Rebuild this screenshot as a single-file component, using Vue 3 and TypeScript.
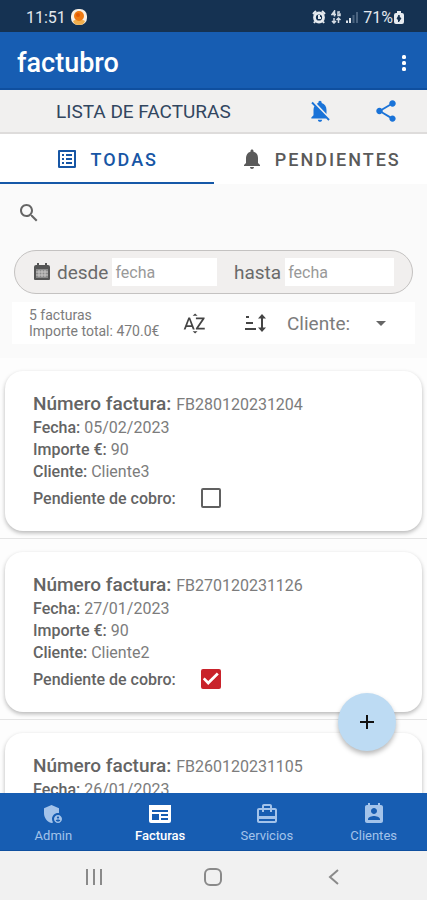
<script setup lang="ts">
import { ref } from 'vue'

interface Invoice {
  id: string
  date: string
  amount: number
  client: string
  pending: boolean
}

const invoices = ref<Invoice[]>([
  { id: 'FB280120231204', date: '05/02/2023', amount: 90, client: 'Cliente3', pending: false },
  { id: 'FB270120231126', date: '27/01/2023', amount: 90, client: 'Cliente2', pending: true },
  { id: 'FB260120231105', date: '26/01/2023', amount: 90, client: 'Cliente1', pending: false },
])

const tab = ref<'all' | 'pending'>('all')
const search = ref('')
const from = ref('')
const to = ref('')

const sections = [
  {
    label: 'Admin',
    icon: 'M17 11c.34 0 .67.04 1 .09V6.27L10.5 3 3 6.27v4.91c0 4.54 3.2 8.79 7.5 9.82.55-.13 1.08-.32 1.6-.55-.69-.98-1.1-2.17-1.1-3.45 0-3.31 2.69-6 6-6zM17 13c-2.21 0-4 1.79-4 4s1.79 4 4 4 4-1.79 4-4-1.79-4-4-4zm0 1.38c.62 0 1.12.51 1.12 1.12s-.51 1.12-1.12 1.12-1.12-.51-1.12-1.12.5-1.12 1.12-1.12zm0 5.37c-.93 0-1.74-.46-2.24-1.17.05-.72 1.51-1.08 2.24-1.08s2.19.36 2.24 1.08c-.5.71-1.31 1.17-2.24 1.17z',
  },
  {
    label: 'Facturas',
    icon: 'M1 3h22v16a2 2 0 0 1-2 2H3a2 2 0 0 1-2-2zM4 8v2h16V8zM4 12v6h7v-6zM13 12v2h7v-2zM13 16v2h7v-2z',
  },
  {
    label: 'Servicios',
    icon: 'M20 6h-3V4c0-1.11-.89-2-2-2H9c-1.11 0-2 .89-2 2v2H4c-1.11 0-2 .89-2 2v11c0 1.11.89 2 2 2h16c1.11 0 2-.89 2-2V8c0-1.11-.89-2-2-2zM9 4h6v2H9V4zm11 15H4v-2h16v2zm0-5H4V8h3v2h2V8h6v2h2V8h3v6z',
  },
  {
    label: 'Clientes',
    icon: 'M19 3h-1V1h-2v2H8V1H6v2H5c-1.11 0-2 .9-2 2v14c0 1.1.89 2 2 2h14c1.1 0 2-.9 2-2V5c0-1.1-.9-2-2-2zm-7 3c1.66 0 3 1.34 3 3s-1.34 3-3 3-3-1.34-3-3 1.34-3 3-3zm6 12H6v-1c0-2 4-3.1 6-3.1s6 1.1 6 3.1v1z',
  },
]
const current = ref('Facturas')
</script>

<template>
  <div class="screen">
    <div class="status">
      <span class="clock">11:51</span>
      <svg class="notice" width="16" height="16" viewBox="0 0 16 16" aria-hidden="true">
        <rect x="0" y="0" width="16" height="16" rx="7" fill="#f8efe4" />
        <path d="M2 12c3-2 9-2 12 0-1 3-3 4-6 4s-5-1-6-4z" fill="#f2b04e" />
        <circle cx="8" cy="7" r="5" fill="#ee7a12" />
        <circle cx="7" cy="6" r="2" fill="#e25a05" />
      </svg>
      <div class="signals">
        <svg width="14" height="14" viewBox="0 0 14 14" fill="none" stroke="#e6ebf0" aria-hidden="true">
          <circle cx="7" cy="7.500" r="4.500" stroke-width="2.800" />
          <path d="M7 5v3h2M1 4 4 1M13 4 10 1M3 11.500 2 13M11 11.500l1 1.500" stroke-width="2" />
        </svg>
        <svg width="10" height="14" viewBox="0 0 10 14" fill="none" stroke="#d5dce4" aria-hidden="true">
          <path d="M3.500 6.500V1L1 4.500h4M9 2H7v3.500h2V4H8" stroke-width="1.500" />
          <path d="M3 8v5M1 11l2 2 2-2M7.500 13V8M5.500 10l2-2 2 2" stroke-width="1.500" />
        </svg>
        <svg width="12" height="12" viewBox="0 0 12 12" aria-hidden="true">
          <path d="M0 9.500h2V12H0zM3 7h2v5H3z" fill="#dce2e9" />
          <path d="M6.500 4h2v8h-2zM10 1h2v11h-2z" fill="#4b6480" />
        </svg>
        <span class="charge">71%</span>
        <svg width="10" height="14" viewBox="0 0 10 14" aria-hidden="true">
          <path d="M3 1h4v2h1q2 0 2 2v7q0 2-2 2H2q-2 0-2-2V5q0-2 2-2h1z" fill="#e6ebf0" />
          <path d="M5 5 3 9h1.500v3L7 8H5.500z" fill="#15304f" stroke="#15304f" />
        </svg>
      </div>
    </div>

    <header class="appbar">
      <h1>factubro</h1>
      <button type="button" class="plain" aria-label="Más opciones">
        <svg width="8" height="18" viewBox="0 0 8 18" fill="#fff">
          <rect x="2" y="1" width="4" height="4" rx="1.500" />
          <rect x="2" y="7" width="4" height="4" rx="1.500" />
          <rect x="2" y="13" width="4" height="4" rx="1.500" />
        </svg>
      </button>
    </header>

    <div class="toolbar">
      <h2>LISTA DE FACTURAS</h2>
      <button type="button" class="plain" aria-label="Silenciar avisos">
        <svg width="26" height="26" viewBox="0 0 24 24" fill="#1a73d8">
          <path d="M20 18.690L7.840 6.140 5.270 3.490 4 4.760l2.800 2.800v.01c-.52.99-.8 2.160-.8 3.420v5l-2 2v1h13.730l2 2L21 19.720l-1-1.030zM12 22c1.110 0 2-.89 2-2h-4c0 1.110.89 2 2 2zm6-7.320V11c0-3.080-1.640-5.640-4.500-6.320V4c0-.83-.67-1.500-1.500-1.500s-1.500.67-1.500 1.500v.68c-.5.100-1 .3-1.440.55L18 14.680z" />
        </svg>
      </button>
      <button type="button" class="plain" aria-label="Compartir">
        <svg width="26" height="26" viewBox="0 0 24 24" fill="#1a73d8">
          <path d="M18 16.080c-.76 0-1.440.3-1.960.77L8.910 12.700c.05-.23.09-.46.09-.7s-.04-.47-.09-.7l7.050-4.110c.54.5 1.250.81 2.040.81 1.660 0 3-1.340 3-3s-1.340-3-3-3-3 1.340-3 3c0 .24.04.47.09.7L8.040 9.810C7.500 9.310 6.790 9 6 9c-1.660 0-3 1.340-3 3s1.340 3 3 3c.79 0 1.500-.31 2.040-.81l7.120 4.160c-.05.21-.08.43-.08.65 0 1.610 1.310 2.920 2.920 2.920s2.920-1.310 2.920-2.920-1.310-2.920-2.920-2.920z" />
        </svg>
      </button>
    </div>

    <div class="tabs" role="tablist">
      <button type="button" role="tab" :aria-selected="tab === 'all'" :class="{ on: tab === 'all' }" @click="tab = 'all'">
        <svg width="24" height="24" viewBox="0 0 24 24" fill="currentColor" aria-hidden="true">
          <path d="M19 5v14H5V5h14m1.100-2H3.900c-.5 0-.9.4-.9.9v16.200c0 .4.4.9.9.9h16.200c.4 0 .9-.5.9-.9V3.900c0-.5-.5-.9-.9-.9zM11 7h6v2h-6V7zm0 4h6v2h-6v-2zm0 4h6v2h-6zM7 7h2v2H7zm0 4h2v2H7zm0 4h2v2H7z" />
        </svg>
        TODAS
      </button>
      <button type="button" role="tab" :aria-selected="tab === 'pending'" :class="{ on: tab === 'pending' }" @click="tab = 'pending'">
        <svg width="24" height="24" viewBox="0 0 24 24" fill="currentColor" aria-hidden="true">
          <path d="M12 22c1.100 0 2-.9 2-2h-4c0 1.100.89 2 2 2zm6-6v-5c0-3.070-1.640-5.640-4.500-6.320V4c0-.83-.67-1.500-1.500-1.500s-1.500.67-1.500 1.500v.68C7.630 5.360 6 7.920 6 11v5l-2 2v1h16v-1l-2-2z" />
        </svg>
        PENDIENTES
      </button>
    </div>

    <section class="filters">
      <div class="search">
        <label for="search" aria-label="Buscar">
          <svg width="24" height="24" viewBox="0 0 24 24" fill="#666">
            <path d="M15.500 14h-.79l-.28-.27C15.410 12.590 16 11.110 16 9.500 16 5.910 13.090 3 9.500 3S3 5.910 3 9.500 5.910 16 9.500 16c1.610 0 3.090-.59 4.230-1.570l.27.28v.79l5 4.990L20.490 19l-4.990-5zm-6 0C7.010 14 5 11.990 5 9.500S7.010 5 9.500 5 14 7.010 14 9.500 11.990 14 9.500 14z" />
          </svg>
        </label>
        <input id="search" v-model="search" type="text" />
      </div>

      <div class="dates">
        <svg width="18" height="18" viewBox="0 0 18 18" aria-hidden="true">
          <path d="M3 2h1V0h2v2h6V0h2v2h1q2 0 2 2v12q0 1-1 1H2q-1 0-1-1V4q0-2 2-2z" fill="#555" />
          <path d="M3 6h12v9H3z" fill="#8b8b8b" />
          <path d="M6 7v7M9 7v7M12 7v7M3 9h12M3 12h12" stroke="#c9c7c6" />
        </svg>
        <div class="field">
          <label for="from">desde</label>
          <input id="from" v-model="from" type="text" placeholder="fecha" />
        </div>
        <div class="field">
          <label for="to">hasta</label>
          <input id="to" v-model="to" type="text" placeholder="fecha" />
        </div>
      </div>

      <div class="summary">
        <p>5 facturas<br />Importe total: 470.0€</p>
        <button type="button" class="plain" aria-label="Ordenar por nombre">
          <svg width="25" height="25" viewBox="0 0 24 24" fill="#444">
            <path d="M14.940 4.660h-4.720l2.360-2.360zm-4.690 14.710h4.660l-2.330 2.330zM6.100 6.270L1.600 17.730h1.840l.92-2.450h5.110l.92 2.450h1.840L7.740 6.270H6.100zm-1.130 7.370l1.940-5.180 1.940 5.180H4.970zm10.760 2.500h6.120v1.590h-8.530v-1.290l5.920-8.560h-5.880v-1.600h8.300v1.260l-5.930 8.600z" />
          </svg>
        </button>
        <button type="button" class="plain" aria-label="Ordenar por importe">
          <svg width="22" height="20" viewBox="0 0 22 20" fill="none" stroke="#444" stroke-width="2">
            <path d="M1 4h3M1 10h7M0 16h11M17 4v12" />
            <path d="M13 5.500 17 1l4 4.500zM13 14.500l4 4.500 4-4.500z" fill="#444" stroke="none" />
          </svg>
        </button>
        <div class="select">
          <select aria-label="Cliente">
            <option>Cliente:</option>
          </select>
          <svg width="10" height="5" viewBox="0 0 10 5" fill="#666" aria-hidden="true"><path d="M0 0h10L5 5z" /></svg>
        </div>
      </div>
    </section>

    <main>
      <ul class="list">
        <li v-for="inv in invoices" :key="inv.id">
          <article class="card">
            <h3><b>Número factura:</b> {{ inv.id }}</h3>
            <p><b>Fecha:</b> {{ inv.date }}</p>
            <p><b>Importe €:</b> {{ inv.amount }}</p>
            <p><b>Cliente:</b> {{ inv.client }}</p>
            <label class="check">
              <b>Pendiente de cobro:</b>
              <input v-model="inv.pending" type="checkbox" />
            </label>
          </article>
        </li>
      </ul>
      <button type="button" class="fab" aria-label="Nueva factura">
        <svg width="16" height="16" viewBox="0 0 16 16" stroke="#111" stroke-width="2"><path d="M8 1v14M1 8h14" /></svg>
      </button>
    </main>

    <nav class="bottom">
      <a v-for="s in sections" :key="s.label" href="#" :class="{ on: s.label === current }" @click.prevent="current = s.label">
        <svg width="24" height="24" viewBox="0 0 24 24" fill="currentColor" fill-rule="evenodd" aria-hidden="true"><path :d="s.icon" /></svg>
        {{ s.label }}
      </a>
    </nav>

    <div class="system">
      <button type="button" class="plain" aria-label="Recientes">
        <svg width="18" height="18" viewBox="0 0 18 18" stroke="#8a8a8a" stroke-width="2"><path d="M2 1v16M9 1v16M16 1v16" /></svg>
      </button>
      <button type="button" class="plain" aria-label="Inicio">
        <svg width="18" height="18" viewBox="0 0 18 18" fill="none" stroke="#8a8a8a" stroke-width="2"><rect x="1" y="1" width="16" height="16" rx="5" /></svg>
      </button>
      <button type="button" class="plain" aria-label="Atrás">
        <svg width="18" height="18" viewBox="0 0 18 18" fill="none" stroke="#8a8a8a" stroke-width="2"><path d="M14 2 6 9l8 7" /></svg>
      </button>
    </div>
  </div>
</template>

<style>
body {
  margin: 0;
}
</style>

<style scoped>
.screen {
  display: flex;
  flex-direction: column;
  height: 100vh;
  background: #fdfdfd;
  color: #7c7c7c;
  font-family: Roboto, "Liberation Sans", sans-serif;
  font-size: 16px;
}
.screen * {
  box-sizing: border-box;
}
h1, h2, h3, p, ul {
  margin: 0;
  padding: 0;
}
svg {
  display: block;
  flex: none;
}
button, input, select {
  font: inherit;
  color: inherit;
}
.plain {
  display: flex;
  align-items: center;
  justify-content: center;
  padding: 0;
  border: 0;
  background: none;
}
.status {
  display: flex;
  align-items: center;
  gap: 5px;
  height: 32px;
  padding: 2px 23px 0 26px;
  background: #153252;
  color: #e3e8ee;
}
.signals {
  display: flex;
  align-items: center;
  gap: 5px;
  margin-left: auto;
}
.charge {
  margin-right: -4px;
}
.appbar {
  display: flex;
  align-items: center;
  justify-content: space-between;
  height: 58px;
  padding: 5px 19px 0 17px;
  border-bottom: 2px solid #0f4f9f;
  background: #175db2;
  color: #fff;
}
.appbar h1 {
  font-size: 27px;
  font-weight: 500;
}
.toolbar {
  display: flex;
  align-items: center;
  gap: 40px;
  height: 44px;
  padding: 0 28px 0 56px;
  border-bottom: 2px solid #dedcdb;
  background: #f1f0ef;
}
.toolbar h2 {
  flex: 1;
  color: #32465f;
  font-size: 19px;
  font-weight: 400;
}
.tabs {
  display: grid;
  grid-template-columns: 1fr 1fr;
  height: 50px;
  background: #fff;
}
.tabs button {
  display: flex;
  align-items: center;
  justify-content: center;
  gap: 11px;
  padding: 2px 0 0;
  border: 0;
  border-bottom: 2px solid transparent;
  background: none;
  color: #5a5a5a;
  font-size: 18px;
  font-weight: 500;
  letter-spacing: 2px;
}
.tabs .on {
  border-bottom-color: #1558a8;
  color: #1756a5;
}
.filters {
  padding: 0 12px 14px;
  background: #fafafa;
}
.search {
  display: flex;
  align-items: center;
  height: 58px;
  margin-bottom: 8px;
  padding-left: 5px;
}
.search input {
  flex: 1;
  height: 40px;
  border: 0;
  outline: 0;
  background: none;
}
.dates {
  display: flex;
  align-items: center;
  height: 44px;
  margin: 0 2px;
  padding: 0 18px;
  border: 1px solid #c4c2c1;
  border-radius: 22px;
  background: #f1efee;
}
.field {
  display: flex;
  flex: 1;
  align-items: center;
  gap: 4px;
  min-width: 0;
  margin-left: 6px;
}
.field + .field {
  margin-left: 17px;
}
.field label {
  color: #6a6a6a;
  font-size: 19px;
}
.field input {
  width: 107px;
  flex: 1 1 107px;
  min-width: 0;
  height: 28px;
  padding: 0 3px;
  border: 0;
  background: #fff;
}
.field input::placeholder {
  color: #999;
}
.summary {
  display: flex;
  align-items: center;
  height: 42px;
  margin-top: 8px;
  padding: 0 29px 0 17px;
  background: #fff;
}
.summary p {
  width: 153px;
  font-size: 14px;
  line-height: 16px;
}
.summary button + button {
  margin-left: 38px;
}
.select {
  display: flex;
  flex: 1;
  align-items: center;
  margin-left: 20px;
}
.select select {
  flex: 1;
  min-width: 0;
  padding: 0;
  border: 0;
  appearance: none;
  background: none;
  font-size: 19px;
}
main {
  position: relative;
  flex: 1;
  min-height: 0;
}
.list {
  height: 100%;
  overflow-y: auto;
  scrollbar-width: none;
  list-style: none;
}
.list li {
  padding: 13px 5px 7px;
  border-bottom: 1px solid #e4e4e4;
}
.card {
  height: 160px;
  padding: 21px 28px;
  border-radius: 18px;
  background: #fff;
  box-shadow: 0 2px 4px rgba(0, 0, 0, 0.28);
}
.card h3,
.card p {
  font-size: 16px;
  font-weight: 400;
  line-height: 22px;
}
.card h3 {
  line-height: 24px;
}
.card b {
  color: #646464;
  font-weight: 500;
}
.card h3 b {
  margin-right: 1px;
  font-size: 19px;
}
.check {
  display: flex;
  align-items: center;
  gap: 25px;
  height: 30px;
}
.check input {
  display: grid;
  place-items: center;
  width: 20px;
  height: 20px;
  margin: 0;
  border: 2px solid #606060;
  border-radius: 2px;
  appearance: none;
  background: #fff;
}
.check input:checked {
  border-color: #c9232b;
  background: #c9232b;
}
.check input:checked::after {
  content: "";
  width: 16px;
  height: 16px;
  background: #fff;
  clip-path: polygon(0 52%, 12% 40%, 34% 62%, 88% 10%, 100% 22%, 34% 88%);
}
.fab {
  position: absolute;
  right: 31px;
  bottom: 42px;
  display: grid;
  place-items: center;
  width: 58px;
  height: 58px;
  padding: 0;
  border: 0;
  border-radius: 50%;
  background: #bddbf3;
  box-shadow: 0 3px 5px rgba(0, 0, 0, 0.28);
}
.bottom {
  display: grid;
  grid-template-columns: repeat(4, 1fr);
  height: 58px;
  border-bottom: 1px solid #0f4f9f;
  background: #175db2;
}
.bottom a {
  display: flex;
  flex-direction: column;
  align-items: center;
  padding-top: 9px;
  color: #a3c3ea;
  font-size: 13px;
  line-height: 20px;
  text-decoration: none;
}
.bottom .on {
  color: #fff;
  font-weight: 500;
}
.system {
  display: flex;
  align-items: center;
  justify-content: space-around;
  height: 49px;
  padding: 2px 34px 0;
  background: #f1f1f1;
}
</style>
